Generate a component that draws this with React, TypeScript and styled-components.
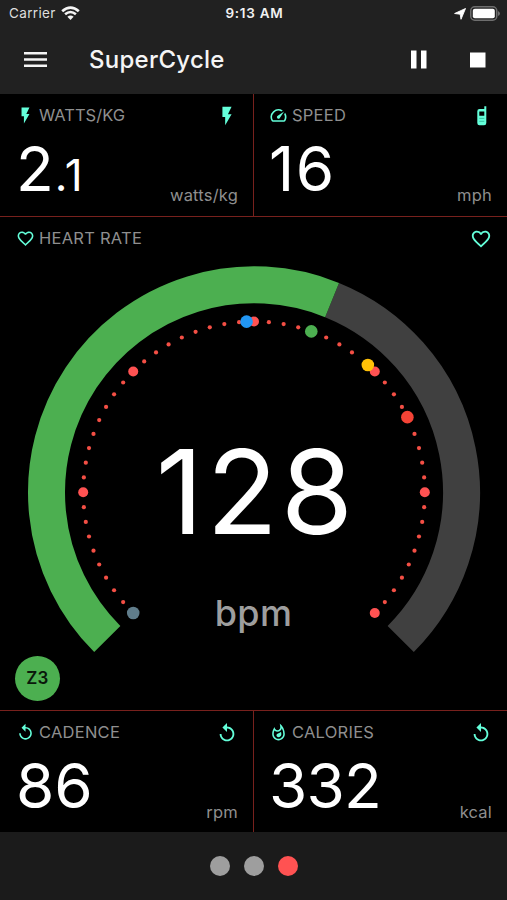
import React from "react";
import styled, { createGlobalStyle } from "styled-components";
import {
  MdFlashOn,
  MdFavoriteBorder,
  MdOutlineSpeed,
  MdReplay,
  MdOutlineWhatshot,
} from "react-icons/md";

const mint = "#64ffda";
const line = "#78211d";

const GlobalStyle = createGlobalStyle`
  * { box-sizing: border-box; }
  body { margin: 0; background: #000; }
`;

const Screen = styled.div`
  width: 507px;
  height: 900px;
  display: flex;
  flex-direction: column;
  background: #000;
  color: #fff;
  font-family: Inter, Roboto, sans-serif;
  overflow: hidden;
`;

const Header = styled.header`
  height: 94px;
  flex: none;
  background: #212121;
`;

const StatusBar = styled.div`
  height: 27px;
  display: grid;
  grid-template-columns: 1fr auto 1fr;
  align-items: center;
  padding: 0 7px 0 9px;
  font-size: 13px;
  line-height: 27px;
`;

const Carrier = styled.div`
  display: flex;
  align-items: center;
  gap: 5px;
  color: #dedede;
  font-size: 13.5px;
  letter-spacing: 0.35px;
`;

const Clock = styled.div`
  font-weight: 600;
  font-size: 13.5px;
  color: #f2f2f2;
  letter-spacing: 0.75px;
`;

const StatusIcons = styled.div`
  display: flex;
  justify-content: flex-end;
  align-items: center;
  gap: 4px;
`;

const AppBar = styled.div`
  height: 65px;
  display: flex;
  align-items: center;
  padding: 0 21px 0 24px;
`;

const Title = styled.h1`
  flex: 1;
  margin: 0 0 0 42px;
  font-size: 24px;
  font-weight: 500;
  line-height: 30px;
  letter-spacing: 0.25px;
  color: #f5f5f5;
`;

const Actions = styled.div`
  display: flex;
  align-items: center;
  gap: 43px;
`;

const Row = styled.div<{ $top?: boolean }>`
  height: 122px;
  flex: none;
  display: grid;
  grid-template-columns: 253px 254px;
  border-top: ${(p) => (p.$top ? `1px solid ${line}` : "none")};
`;

const Tile = styled.section<{ $divided?: boolean }>`
  display: flex;
  flex-direction: column;
  padding: 11px 15px 0 ${(p) => (p.$divided ? 15 : 16)}px;
  border-left: ${(p) => (p.$divided ? `1px solid ${line}` : "none")};
`;

const TileHead = styled.div`
  height: 20px;
  display: flex;
  align-items: center;
  color: ${mint};
  & > svg { flex: none; }
  & > svg:last-child { margin-top: 2px; }
`;

const Label = styled.span<{ $spacing?: number }>`
  flex: 1;
  margin-left: 4px;
  font-size: 16.5px;
  line-height: 20px;
  letter-spacing: ${(p) => p.$spacing ?? 0.25}px;
  color: #8f8f8f;
`;

const TileBody = styled.div`
  display: flex;
  justify-content: space-between;
  height: 80px;
  margin-top: 4px;
`;

const Value = styled.div<{ $spacing?: number }>`
  font-size: 62px;
  line-height: 80px;
  letter-spacing: ${(p) => p.$spacing ?? 0}px;
`;

const Fraction = styled.span`
  margin-left: 1px;
  font-size: 44px;
  letter-spacing: 1px;
`;

const Unit = styled.div`
  align-self: flex-end;
  margin-bottom: 3px;
  font-size: 16.5px;
  line-height: 22px;
  letter-spacing: 0.2px;
  color: #8f8f8f;
`;

const HeartPanel = styled.section`
  height: 494px;
  flex: none;
  display: flex;
  flex-direction: column;
  padding: 11px 15px 0 16px;
  border-top: 1px solid ${line};
`;

const GaugeArea = styled.div`
  position: relative;
  flex: 1;
  margin: 0 -15px 0 -16px;
`;

const GaugeSvg = styled.svg`
  display: block;
`;

const Readout = styled.div`
  position: absolute;
  left: 0;
  right: 0;
  top: 174px;
  display: flex;
  flex-direction: column;
  align-items: center;
`;

const Bpm = styled.div`
  font-size: 117px;
  line-height: 140px;
  letter-spacing: 3px;
  margin-right: -5px;
`;

const BpmUnit = styled.div`
  margin-top: 29px;
  font-size: 36px;
  line-height: 44px;
  font-weight: 500;
  letter-spacing: 0.4px;
  color: #9e9e9e;
`;

const Zone = styled.div`
  position: absolute;
  left: 15px;
  top: 408px;
  width: 45px;
  height: 45px;
  border-radius: 50%;
  background: #4caf50;
  color: #0a180b;
  font-size: 17px;
  font-weight: 600;
  line-height: 44px;
  letter-spacing: 0.3px;
  text-align: center;
`;

const Footer = styled.footer`
  flex: 1;
  display: flex;
  justify-content: center;
  align-items: center;
  gap: 14px;
  background: #1b1b1b;
`;

const PageDot = styled.span<{ $active?: boolean }>`
  width: 20px;
  height: 20px;
  border-radius: 50%;
  background: ${(p) => (p.$active ? "#ff5252" : "#9e9e9e")};
`;

const CX = 254;
const CY = 244.3;

/* Angles are measured clockwise from twelve o'clock. */
const at = (deg: number, r: number) => {
  const a = (deg * Math.PI) / 180;
  return { x: CX + r * Math.sin(a), y: CY - r * Math.cos(a) };
};

const arc = (from: number, to: number, r: number) => {
  const s = at(from, r);
  const e = at(to, r);
  return `M${s.x} ${s.y}A${r} ${r} 0 ${to - from > 180 ? 1 : 0} 1 ${e.x} ${e.y}`;
};

const zones = [
  { deg: -135, color: "#607d8b" },
  { deg: -2.5, color: "#2196f3" },
  { deg: 19.6, color: "#4caf50" },
  { deg: 41.8, color: "#ffc107" },
  { deg: 63.9, color: "#f44336" },
];

const ticks = Array.from({ length: 55 }, (_, i) => i * 5 - 135).filter(
  (deg) => deg !== 40,
);

const Gauge = () => (
  <GaugeSvg width="507" height="461" viewBox="0 0 507 461">
    <path d={arc(22.1, 135, 207.5)} fill="none" stroke="#404040" strokeWidth="37" />
    <path d={arc(-135, 22.1, 207.5)} fill="none" stroke="#4caf50" strokeWidth="37" />
    {ticks.map((deg) => {
      const p = at(deg, 170.8);
      return deg % 45 === 0 ? (
        <circle key={deg} cx={p.x} cy={p.y} r="5" fill="#ff5252" />
      ) : (
        <circle key={deg} cx={p.x} cy={p.y} r="2.1" fill="#f44f45" />
      );
    })}
    {zones.map((z) => {
      const p = at(z.deg, 170.8);
      return <circle key={z.deg} cx={p.x} cy={p.y} r="6.3" fill={z.color} />;
    })}
  </GaugeSvg>
);

const PhoneIcon = () => (
  <svg width="20" height="22" viewBox="0 0 20 22" fill="currentColor">
    <path
      d="M12.3 1.2h2V18q0 2.3-2.2 2.3H7.5Q5.3 20.3 5.3 18V6.3Q5.3 4 7.5 4h4.8zM7.3 6.5v4.3h5V6.5z"
      fillRule="evenodd"
    />
    <path d="M7.3 13.4h5M7.3 16.3h5" stroke="#2fae91" strokeWidth=".8" />
  </svg>
);

const WifiIcon = () => (
  <svg width="19" height="15" viewBox="0 0 19 15" fill="none" stroke="#f5f5f5">
    <path d="M1.2 5.2Q9.5-2.1 17.8 5.2" strokeWidth="2.7" />
    <path d="M4.1 8.3q5.4-4.6 10.8 0" strokeWidth="2.6" />
    <path d="M6.4 10.8q3.1-2.6 6.2 0l-3.1 3.2z" fill="#f5f5f5" stroke="none" />
  </svg>
);

const LocationIcon = () => (
  <svg width="12" height="12" viewBox="0 0 12 12">
    <path d="M11.5.5 7 11.3 6.2 6.2.6 5.5z" fill="#fff" stroke="#fff" strokeWidth=".9" strokeLinejoin="round" />
  </svg>
);

const BatteryIcon = () => (
  <svg width="30" height="15" viewBox="0 0 30 15">
    <rect x=".75" y=".75" width="26" height="13.5" rx="4" fill="#212121" stroke="#6e6e6e" strokeWidth="1.5" />
    <rect x="2.8" y="2.8" width="22" height="9.5" rx="2" fill="#fff" />
    <path d="M28 5q2 1 2 2.5T28 10z" fill="#6e6e6e" />
  </svg>
);

const MenuIcon = () => (
  <svg width="23" height="17" viewBox="0 0 23 17" fill="#f5f5f5">
    <path d="M0 1h23v2.5H0zM0 7.3h23v2.5H0zM0 13.5h23V16H0z" />
  </svg>
);

const PauseIcon = () => (
  <svg width="16" height="19" viewBox="0 0 16 19" fill="#fff">
    <path d="M0 .5h5.5v18H0zM10 .5h5.5v18H10z" />
  </svg>
);

const StopIcon = () => (
  <svg width="16" height="16" viewBox="0 0 16 16" fill="#fff">
    <path d="M0 .5h15.5v15H0z" />
  </svg>
);

export default function App() {
  return (
    <Screen>
      <GlobalStyle />
      <Header>
        <StatusBar>
          <Carrier>
            Carrier <WifiIcon />
          </Carrier>
          <Clock>9:13 AM</Clock>
          <StatusIcons>
            <LocationIcon />
            <BatteryIcon />
          </StatusIcons>
        </StatusBar>
        <AppBar>
          <MenuIcon />
          <Title>SuperCycle</Title>
          <Actions>
            <PauseIcon />
            <StopIcon />
          </Actions>
        </AppBar>
      </Header>

      <Row>
        <Tile>
          <TileHead>
            <MdFlashOn size={19} />
            <Label $spacing={0}>WATTS/KG</Label>
            <MdFlashOn size={22} />
          </TileHead>
          <TileBody>
            <Value>
              2<Fraction>.1</Fraction>
            </Value>
            <Unit>watts/kg</Unit>
          </TileBody>
        </Tile>
        <Tile $divided>
          <TileHead>
            <MdOutlineSpeed size={19} />
            <Label>SPEED</Label>
            <PhoneIcon />
          </TileHead>
          <TileBody>
            <Value $spacing={1.5}>16</Value>
            <Unit>mph</Unit>
          </TileBody>
        </Tile>
      </Row>

      <HeartPanel>
        <TileHead>
          <MdFavoriteBorder size={19} />
          <Label>HEART RATE</Label>
          <MdFavoriteBorder size={22} />
        </TileHead>
        <GaugeArea>
          <Gauge />
          <Readout>
            <Bpm>128</Bpm>
            <BpmUnit>bpm</BpmUnit>
          </Readout>
          <Zone>Z3</Zone>
        </GaugeArea>
      </HeartPanel>

      <Row $top>
        <Tile>
          <TileHead>
            <MdReplay size={19} />
            <Label>CADENCE</Label>
            <MdReplay size={22} />
          </TileHead>
          <TileBody>
            <Value>86</Value>
            <Unit>rpm</Unit>
          </TileBody>
        </Tile>
        <Tile $divided>
          <TileHead>
            <MdOutlineWhatshot size={19} />
            <Label>CALORIES</Label>
            <MdReplay size={22} />
          </TileHead>
          <TileBody>
            <Value $spacing={-0.8}>332</Value>
            <Unit>kcal</Unit>
          </TileBody>
        </Tile>
      </Row>

      <Footer>
        <PageDot />
        <PageDot />
        <PageDot $active />
      </Footer>
    </Screen>
  );
}
